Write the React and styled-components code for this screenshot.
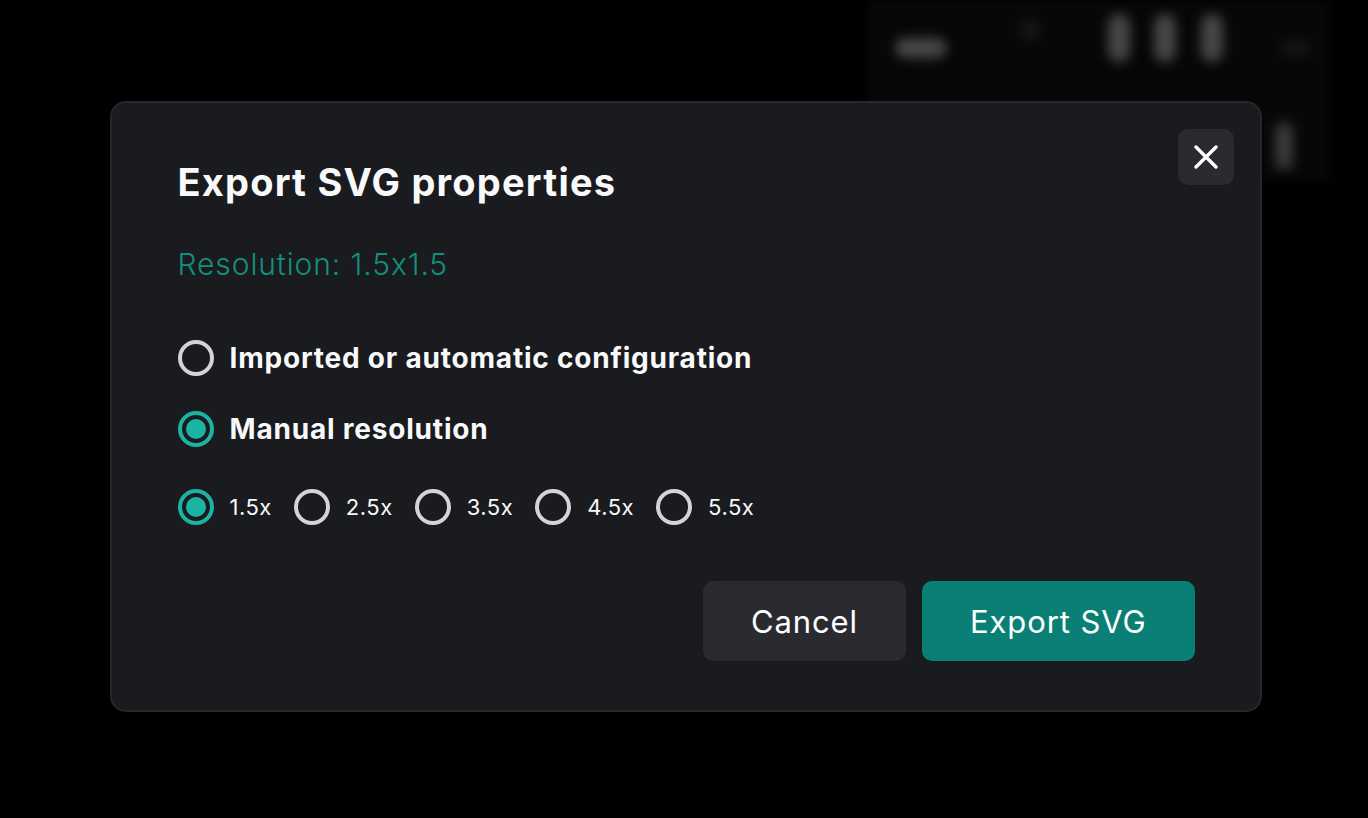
import React from "react";
import styled, { createGlobalStyle } from "styled-components";

const Global = createGlobalStyle`
  html, body { margin: 0; padding: 0; background: #000; }
  body {
    font-family: "Inter", "Noto Sans", sans-serif;
    color: #fff;
    font-feature-settings: "calt" 0;
  }
  * { box-sizing: border-box; }
`;

const Page = styled.div`
  position: relative;
  width: 1368px;
  height: 818px;
  overflow: hidden;
  display: flex;
  align-items: flex-start;
  justify-content: center;
  padding-top: 101px;
  padding-left: 3px;
`;

const Backdrop = styled.div`
  position: absolute;
  left: 868px;
  top: 0;
  width: 462px;
  height: 180px;
  background: #070707;
  filter: blur(5px);
`;

const Blob = styled.div`
  position: absolute;
  background: #474747;
  border-radius: 12px;
  filter: blur(6px);
  opacity: ${(p) => p.$o || 1};
`;

const Dialog = styled.div`
  position: relative;
  z-index: 1;
  width: 1152px;
  background: #1a1b1e;
  border: 2px solid #26272b;
  border-radius: 16px;
  padding: 57px 65px 49px 66px;
  display: flex;
  flex-direction: column;
`;

const CloseButton = styled.button`
  position: absolute;
  top: 26px;
  right: 26px;
  width: 56px;
  height: 56px;
  border: none;
  border-radius: 10px;
  background: #2a2b2f;
  display: flex;
  align-items: center;
  justify-content: center;
  padding: 0;
`;

const Title = styled.h2`
  margin: 0;
  font-size: 38px;
  line-height: 44px;
  font-weight: 700;
  color: #f8f9fa;
  letter-spacing: 1.2px;
`;

const Resolution = styled.div`
  margin-top: 42px;
  font-size: 30px;
  line-height: 36px;
  font-weight: 300;
  color: #12907f;
  letter-spacing: 0.9px;
`;

const Options = styled.div`
  margin-top: 58px;
  display: flex;
  flex-direction: column;
  gap: 35px;
`;

const Row = styled.label`
  display: flex;
  align-items: center;
  gap: 16px;
  height: 36px;
`;

const Circle = styled.span`
  width: 36px;
  height: 36px;
  flex: none;
  border-radius: 50%;
  border: 4px solid ${(p) => (p.$checked ? "#1bb4a2" : "#d4d4d4")};
  display: flex;
  align-items: center;
  justify-content: center;
  &::after {
    content: "";
    display: ${(p) => (p.$checked ? "block" : "none")};
    width: 20px;
    height: 20px;
    border-radius: 50%;
    background: #1bb4a2;
  }
`;

const BigLabel = styled.span`
  font-size: 28px;
  font-weight: 700;
  color: #f8f9fa;
  letter-spacing: 0.8px;
`;

const ScaleRow = styled.div`
  margin-top: 7px;
  display: flex;
  align-items: center;
  gap: 22px;
`;

const SmallLabel = styled.span`
  font-size: 22px;
  font-weight: 400;
  color: #f8f9fa;
  letter-spacing: 0.5px;
`;

const Footer = styled.div`
  margin-top: 56px;
  display: flex;
  justify-content: flex-end;
  gap: 16px;
`;

const Button = styled.button`
  height: 80px;
  padding: 0 48px;
  border: none;
  border-radius: 10px;
  font-family: "Inter", "Noto Sans", sans-serif;
  font-size: 31px;
  font-weight: 400;
  letter-spacing: 0.9px;
  color: #fff;
  background: ${(p) => (p.$primary ? "#0a7f75" : "#2a2b30")};
`;

const scales = ["1.5x", "2.5x", "3.5x", "4.5x", "5.5x"];

export default function App() {
  return (
    <>
      <Global />
      <Page>
        <Backdrop />
        <Blob style={{ left: 895, top: 38, width: 52, height: 20 }} />
        <Blob style={{ left: 1108, top: 14, width: 22, height: 48 }} />
        <Blob style={{ left: 1154, top: 14, width: 22, height: 48 }} />
        <Blob style={{ left: 1201, top: 14, width: 22, height: 48 }} />
        <Blob style={{ left: 1275, top: 122, width: 18, height: 48 }} $o={0.8} />
        <Blob style={{ left: 1020, top: 20, width: 20, height: 20 }} $o={0.25} />
        <Blob style={{ left: 1280, top: 40, width: 30, height: 16 }} $o={0.2} />
        <Dialog>
          <CloseButton aria-label="Close">
            <svg width="24" height="24" viewBox="0 0 24 24" fill="none">
              <path d="M2 2 L22 22 M22 2 L2 22" stroke="#fff" strokeWidth="3.4" strokeLinecap="round" />
            </svg>
          </CloseButton>
          <Title>Export SVG properties</Title>
          <Resolution>Resolution: 1.5x1.5</Resolution>
          <Options>
            <Row>
              <Circle />
              <BigLabel>Imported or automatic configuration</BigLabel>
            </Row>
            <Row>
              <Circle $checked />
              <BigLabel>Manual resolution</BigLabel>
            </Row>
            <ScaleRow>
              {scales.map((s, i) => (
                <Row key={s}>
                  <Circle $checked={i === 0} />
                  <SmallLabel>{s}</SmallLabel>
                </Row>
              ))}
            </ScaleRow>
          </Options>
          <Footer>
            <Button>Cancel</Button>
            <Button $primary>Export SVG</Button>
          </Footer>
        </Dialog>
      </Page>
    </>
  );
}
